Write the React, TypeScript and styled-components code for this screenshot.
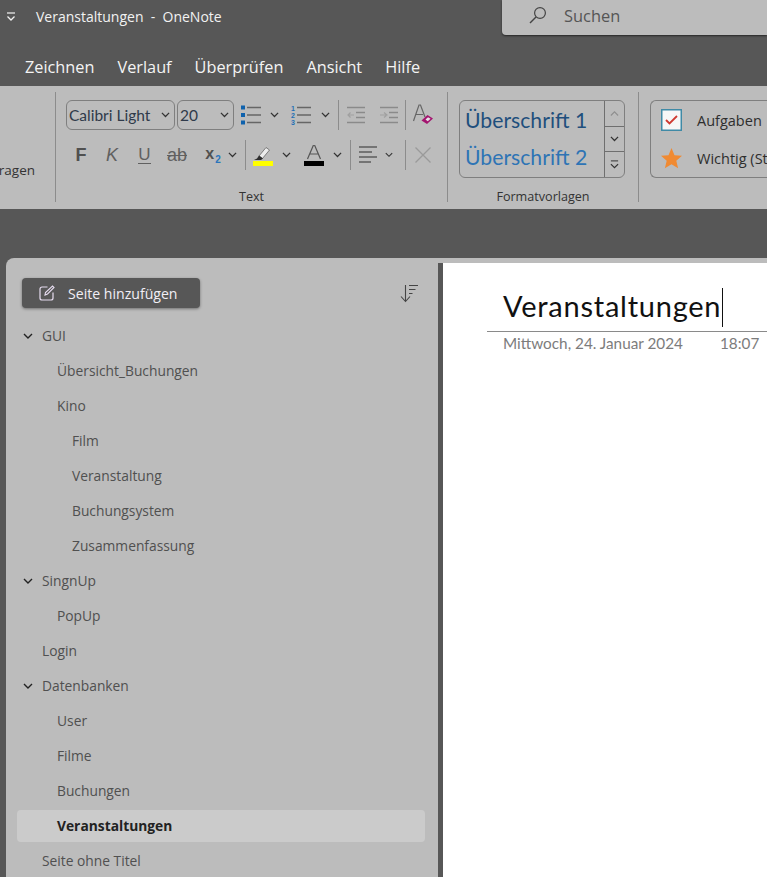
import styled, { createGlobalStyle } from "styled-components";

const UI_FONT = `"Open Sans", "Noto Sans", sans-serif`;
const DOC_FONT = `Lato, "Liberation Sans", sans-serif`;

const GlobalStyle = createGlobalStyle`
  html, body {
    margin: 0;
    padding: 0;
    height: 100%;
    overflow: hidden;
    background: #575757;
  }
`;

const Window = styled.div`
  width: 767px;
  height: 877px;
  display: flex;
  flex-direction: column;
  overflow: hidden;
  background: #575757;
  font-family: ${UI_FONT};
`;

const TitleBar = styled.header`
  height: 36px;
  display: flex;
  align-items: flex-start;
  color: #f2f2f2;
`;

const QuickAccess = styled.div`
  width: 36px;
  height: 34px;
  padding-left: 6px;
  box-sizing: border-box;
  display: flex;
  align-items: center;
`;

const AppTitle = styled.div`
  flex: 1;
  height: 34px;
  line-height: 34px;
  font-size: 14px;
  white-space: pre;
`;

const SearchBox = styled.div`
  width: 265px;
  height: 35px;
  padding: 0 0 5px 27px;
  box-sizing: border-box;
  display: flex;
  align-items: center;
  gap: 17px;
  background: #bcbcbc;
  border-bottom-left-radius: 4px;
  box-shadow: 0 1px 2px rgba(0, 0, 0, 0.55);
  color: #555;
  font-size: 16.4px;
`;

const TabBar = styled.nav`
  height: 50px;
  padding: 12px 0 0 25px;
  box-sizing: border-box;
  display: flex;
  align-items: center;
  gap: 23px;
`;

const Tab = styled.span`
  color: #f4f4f4;
  font-size: 16.3px;
`;

const Ribbon = styled.section`
  height: 123px;
  padding-top: 6px;
  box-sizing: border-box;
  display: flex;
  background: #bcbcbc;
`;

const Group = styled.div<{ $width: number }>`
  width: ${(p) => p.$width}px;
  height: 110px;
  flex: none;
  box-sizing: border-box;
  border-right: 1px solid #8c8c8c;
  display: flex;
  flex-direction: column;
  &:last-child {
    border-right: none;
  }
`;

const GroupBody = styled.div<{ $pad?: number }>`
  height: 98px;
  flex: none;
  padding: 8px 0 0 ${(p) => p.$pad ?? 0}px;
  box-sizing: border-box;
  display: flex;
`;

const GroupLabel = styled.div`
  height: 14px;
  flex: none;
  line-height: 14px;
  text-align: center;
  font-size: 12.6px;
  color: #333;
`;

const ClippedBody = styled.div`
  height: 96px;
  padding: 69px 20px 0 0;
  box-sizing: border-box;
  display: flex;
  justify-content: flex-end;
  font-size: 13.5px;
  color: #333;
`;

const ToolRows = styled.div`
  display: flex;
  flex-direction: column;
  gap: 10px;
`;

const ToolRow = styled.div`
  height: 30px;
  display: flex;
  align-items: center;
`;

const FontSelect = styled.div<{ $width: number }>`
  width: ${(p) => p.$width}px;
  height: 30px;
  margin-right: 2px;
  padding: 0 4px 0 2px;
  box-sizing: border-box;
  display: flex;
  align-items: center;
  justify-content: space-between;
  border: 1px solid #7f7f7f;
  border-radius: 6px;
  font-family: ${DOC_FONT};
  font-size: 15.5px;
  color: #2f3a4a;
`;

const Cell = styled.div<{ $width: number; $left?: number }>`
  width: ${(p) => p.$width}px;
  height: 30px;
  margin-left: ${(p) => p.$left ?? 0}px;
  flex: none;
  display: flex;
  align-items: center;
  justify-content: center;
  font-family: ${UI_FONT};
`;

const Divider = styled.div<{ $left?: number }>`
  width: 1px;
  height: 30px;
  margin-left: ${(p) => p.$left ?? 0}px;
  flex: none;
  background: #8c8c8c;
`;

const BoldGlyph = styled.span`
  font-weight: 700;
  font-size: 18px;
  font-family: "Liberation Sans", sans-serif;
  color: #505050;
`;

const ItalicGlyph = styled.span`
  font-style: italic;
  font-size: 18px;
  font-family: "Liberation Sans", sans-serif;
  color: #606060;
`;

const UnderGlyph = styled.span`
  font-size: 17px;
  font-family: "Liberation Sans", sans-serif;
  color: #606060;
  border-bottom: 1.5px solid #606060;
  line-height: 17px;
`;

const StrikeGlyph = styled.span`
  font-size: 18px;
  font-family: "Liberation Sans", sans-serif;
  color: #606060;
  text-decoration: line-through;
`;

const SubGlyph = styled.span`
  font-weight: 700;
  font-size: 16px;
  font-family: "Liberation Sans", sans-serif;
  color: #505050;
  sub {
    font-size: 10px;
    font-weight: 700;
    color: #2a75bb;
    margin-left: 1px;
  }
`;

const StyleGallery = styled.div`
  width: 166px;
  height: 78px;
  margin-left: 11px;
  box-sizing: border-box;
  display: flex;
  border: 1px solid #7f7f7f;
  border-radius: 6px;
  overflow: hidden;
`;

const StyleList = styled.div`
  flex: 1;
  padding: 0 0 2px 5px;
  display: flex;
  flex-direction: column;
  justify-content: space-around;
  font-family: ${DOC_FONT};
  font-size: 21.2px;
  line-height: 36px;
`;

const StyleName = styled.div<{ $color: string }>`
  color: ${(p) => p.$color};
  white-space: nowrap;
`;

const Scroller = styled.div`
  width: 19px;
  flex: none;
  display: flex;
  flex-direction: column;
  border-left: 1px solid #6f6f6f;
`;

const ScrollCell = styled.div<{ $active?: boolean }>`
  flex: 1;
  display: flex;
  align-items: center;
  justify-content: center;
  & + & {
    border-top: 1px solid ${(p) => (p.$active ? "#6f6f6f" : "#8c8c8c")};
  }
`;

const TagBox = styled.div`
  width: 140px;
  height: 78px;
  margin-left: 11px;
  padding-left: 10px;
  box-sizing: border-box;
  flex: none;
  display: flex;
  flex-direction: column;
  justify-content: space-around;
  border: 1px solid #7f7f7f;
  border-right: none;
  border-radius: 6px 0 0 6px;
`;

const TagRow = styled.div`
  display: flex;
  align-items: center;
  gap: 15px;
  font-size: 14.5px;
  color: #2e2e2e;
  white-space: nowrap;
`;

const Workspace = styled.main`
  flex: 1;
  min-height: 0;
  margin-top: 49px;
  padding-left: 6px;
  display: flex;
`;

const Sidebar = styled.aside`
  width: 432px;
  flex: none;
  padding: 20px 13px 0 11px;
  box-sizing: border-box;
  background: #bcbcbc;
  border-top-left-radius: 8px;
`;

const SidebarTop = styled.div`
  height: 30px;
  margin-bottom: 12px;
  padding: 0 7px 0 5px;
  display: flex;
  align-items: center;
  justify-content: space-between;
`;

const AddPage = styled.button`
  width: 178px;
  height: 30px;
  padding: 0 0 0 17px;
  display: flex;
  align-items: center;
  gap: 13px;
  border: none;
  border-radius: 4px;
  background: #575757;
  box-shadow: 0 1px 3px rgba(0, 0, 0, 0.4);
  color: #f1eef5;
  font-family: ${UI_FONT};
  font-size: 14.1px;
`;

const PageList = styled.ul`
  margin: 0;
  padding: 0;
  list-style: none;
  display: flex;
  flex-direction: column;
  gap: 3px;
`;

const PageRow = styled.li<{ $level: number; $selected?: boolean }>`
  position: relative;
  height: 32px;
  padding: 0 0 2px ${(p) => 25 + p.$level * 15}px;
  box-sizing: border-box;
  display: flex;
  align-items: center;
  border-radius: 4px;
  background: ${(p) => (p.$selected ? "#cbcbcb" : "transparent")};
  color: ${(p) => (p.$selected ? "#222" : "#505050")};
  font-size: 13.8px;
  font-weight: ${(p) => (p.$selected ? 700 : 400)};
`;

const Caret = styled.span`
  position: absolute;
  left: 6px;
  top: 13px;
  display: flex;
`;

const PageArea = styled.div`
  flex: 1;
  padding-top: 5px;
  display: flex;
  background: #bcbcbc;
`;

const Canvas = styled.article`
  flex: 1;
  padding-top: 25px;
  background: #fff;
  border-left: 5px solid #575757;
  overflow: hidden;
`;

const TitleLine = styled.div`
  height: 43px;
  margin-left: 44px;
  padding-left: 16px;
  display: flex;
  align-items: flex-start;
  border-bottom: 1px solid #8a8a8a;
`;

const PageTitle = styled.h1`
  margin: 0;
  font-family: ${DOC_FONT};
  font-size: 29px;
  font-weight: 400;
  letter-spacing: 0.75px;
  line-height: 36px;
  color: #111;
  white-space: nowrap;
`;

const TextCursor = styled.span`
  width: 1px;
  height: 39px;
  margin-left: 1px;
  flex: none;
  background: #111;
`;

const Stamp = styled.div`
  margin: 1px 0 0 60px;
  display: flex;
  gap: 37px;
  font-family: ${DOC_FONT};
  font-size: 15.3px;
  line-height: 20px;
  color: #7c7c7c;
  white-space: nowrap;
`;

const Chevron = ({ color = "#333", size = 9 }: { color?: string; size?: number }) => (
  <svg width={size} height={size * 0.6} viewBox="0 0 10 6" fill="none">
    <path d="M1 1l4 4 4-4" stroke={color} strokeWidth="1.4" />
  </svg>
);

const LinesIcon = ({ x = 0, width = 14, color = "#666" }: { x?: number; width?: number; color?: string }) => (
  <g stroke={color} strokeWidth="1.3">
    <path d={`M${x} 2.5h${width}M${x} 10h${width}M${x} 17.5h${width}`} />
  </g>
);

const BulletsIcon = () => (
  <svg width="20" height="20" viewBox="0 0 20 20">
    <rect x="0" y="0.5" width="4" height="4" fill="#0f62ad" />
    <rect x="0" y="8" width="4" height="4" fill="#0f62ad" />
    <rect x="0" y="15.5" width="4" height="4" fill="#0f62ad" />
    <LinesIcon x={6} />
  </svg>
);

const NumberingIcon = () => (
  <svg width="20" height="20" viewBox="0 0 20 20">
    <g fill="#1f6fb5" fontSize="7" fontWeight="700" fontFamily="Liberation Sans">
      <text x="0" y="6">1</text>
      <text x="0" y="13">2</text>
      <text x="0" y="20">3</text>
    </g>
    <LinesIcon x={6} />
  </svg>
);

const IndentIcon = ({ flip }: { flip?: boolean }) => (
  <svg width="18" height="18" viewBox="0 0 18 18" fill="none">
    <path d="M0 1.5h18M9 6.5h9M9 11.5h9M0 16.5h18" stroke="#8a8a8a" strokeWidth="1.3" />
    <path
      d={flip ? "M0 9h6M4 6.5L7 9l-3 2.5" : "M7 9H1M3.5 6.5L1 9l2.5 2.5"}
      stroke="#a0a0a0"
      strokeWidth="1.2"
    />
  </svg>
);

const ClearFormatIcon = () => (
  <svg width="21" height="22" viewBox="0 0 21 22" fill="none">
    <path d="M0.5 17L6 1h1.5L12 13M3 10.5h7" stroke="#666" strokeWidth="1.2" />
    <path d="M8.5 16.5l6-5.5 5.5 3.5-6 5.5z" fill="#a3146f" />
    <path d="M12.5 15.5l2.5-2.3 2.6 1.6-2.8 2.5z" fill="#e8e0e6" />
  </svg>
);

const HighlightIcon = () => (
  <svg width="20" height="21" viewBox="0 0 20 21">
    <path d="M6 11L13 2.5l3.5 2.5-7 8.5z" fill="#ececec" stroke="#666" strokeWidth="0.8" />
    <path d="M1 15l3-1.5 2-3 4 3-2 1.5z" fill="#2e2e2e" />
    <rect x="0" y="16" width="20" height="5" fill="#ffff00" />
  </svg>
);

const FontColorIcon = () => (
  <svg width="20" height="21" viewBox="0 0 20 21" fill="none">
    <path d="M3.5 14L9.5 0h1l6 14M6 9h8" stroke="#555" strokeWidth="1.2" />
    <rect x="0" y="16" width="20" height="5" fill="#000" />
  </svg>
);

const AlignIcon = () => (
  <svg width="18" height="18" viewBox="0 0 18 18" fill="none">
    <path d="M0 1h18M0 6h13M0 11h18M0 16h12" stroke="#5c5c5c" strokeWidth="1.4" />
  </svg>
);

const CloseIcon = () => (
  <svg width="16" height="16" viewBox="0 0 16 16" fill="none">
    <path d="M0.5 0.5l15 15M15.5 0.5l-15 15" stroke="#9a9a9a" strokeWidth="1.3" />
  </svg>
);

const SearchIcon = () => (
  <svg width="18" height="18" viewBox="0 0 18 18" fill="none">
    <circle cx="11" cy="7" r="5.4" stroke="#444" strokeWidth="1.2" />
    <path d="M7 11l-6 6" stroke="#444" strokeWidth="1.4" />
  </svg>
);

const QuickMenuIcon = () => (
  <svg width="10" height="10" viewBox="0 0 10 10" fill="none">
    <path d="M1 1h8" stroke="#f2f2f2" strokeWidth="1.2" />
    <path d="M1.5 4.5L5 8l3.5-3.5" stroke="#f2f2f2" strokeWidth="1.3" />
  </svg>
);

const CheckboxIcon = () => (
  <svg width="21" height="22" viewBox="0 0 21 22">
    <rect x="0.75" y="0.75" width="19.5" height="20.5" fill="#f7f7f7" stroke="#3f8aa6" strokeWidth="1.5" />
    <path d="M5 11l3.5 3.5L16 7" fill="none" stroke="#cf3a32" strokeWidth="1.8" />
  </svg>
);

const StarIcon = () => (
  <svg width="21" height="21" viewBox="0 0 21 21">
    <path d="M10.5 0l3 7.2 7.5.6-5.7 4.9 1.8 7.6-6.6-4.1-6.6 4.1 1.8-7.6L0 7.8l7.5-.6z" fill="#f08a32" />
  </svg>
);

const AddPageIcon = () => (
  <svg width="16" height="16" viewBox="0 0 16 16" fill="none">
    <path d="M8.5 2H3a2 2 0 0 0-2 2v9a2 2 0 0 0 2 2h9a2 2 0 0 0 2-2V7.5" stroke="#e6dcf0" strokeWidth="1.2" />
    <path d="M6 10l.5-2.5L13.5 1 15 2.5 8.5 9z" stroke="#e6dcf0" strokeWidth="1.1" />
  </svg>
);

const SortIcon = () => (
  <svg width="18" height="19" viewBox="0 0 18 19" fill="none">
    <path d="M5.5 1v16M1 12.5L5.5 17.5 10 12.5" stroke="#444" strokeWidth="1.1" />
    <path d="M9 1.5h9M9 5.5h6.5M9 9.5h3.5" stroke="#444" strokeWidth="1.1" />
  </svg>
);

const UpArrow = () => (
  <svg width="9" height="5.4" viewBox="0 0 10 6" fill="none">
    <path d="M1 5l4-4 4 4" stroke="#8f8f8f" strokeWidth="1.3" />
  </svg>
);

const MoreArrow = () => (
  <svg width="9" height="9" viewBox="0 0 10 10" fill="none">
    <path d="M1 1h8" stroke="#333" strokeWidth="1.1" />
    <path d="M1 4.5l4 4 4-4" stroke="#333" strokeWidth="1.3" />
  </svg>
);

type PageEntry = { name: string; level: number; expandable?: boolean; selected?: boolean };

const pages: PageEntry[] = [
  { name: "GUI", level: 0, expandable: true },
  { name: "Übersicht_Buchungen", level: 1 },
  { name: "Kino", level: 1 },
  { name: "Film", level: 2 },
  { name: "Veranstaltung", level: 2 },
  { name: "Buchungsystem", level: 2 },
  { name: "Zusammenfassung", level: 2 },
  { name: "SingnUp", level: 0, expandable: true },
  { name: "PopUp", level: 1 },
  { name: "Login", level: 0 },
  { name: "Datenbanken", level: 0, expandable: true },
  { name: "User", level: 1 },
  { name: "Filme", level: 1 },
  { name: "Buchungen", level: 1 },
  { name: "Veranstaltungen", level: 1, selected: true },
  { name: "Seite ohne Titel", level: 0 },
];

const tabs = ["Zeichnen", "Verlauf", "Überprüfen", "Ansicht", "Hilfe"];

export default function App() {
  return (
    <>
      <GlobalStyle />
      <Window>
        <TitleBar>
          <QuickAccess>
            <QuickMenuIcon />
          </QuickAccess>
          <AppTitle>{"Veranstaltungen  -  OneNote"}</AppTitle>
          <SearchBox>
            <SearchIcon />
            Suchen
          </SearchBox>
        </TitleBar>
        <TabBar>
          {tabs.map((tab) => (
            <Tab key={tab}>{tab}</Tab>
          ))}
        </TabBar>
        <Ribbon>
          <Group $width={56}>
            <ClippedBody>ragen</ClippedBody>
          </Group>
          <Group $width={392}>
            <GroupBody $pad={10}>
              <ToolRows>
                <ToolRow>
                  <FontSelect $width={109}>
                    Calibri Light
                    <Chevron />
                  </FontSelect>
                  <FontSelect $width={57}>
                    20
                    <Chevron />
                  </FontSelect>
                  <Cell $width={30}><BulletsIcon /></Cell>
                  <Cell $width={16}><Chevron /></Cell>
                  <Cell $width={38}><NumberingIcon /></Cell>
                  <Cell $width={10}><Chevron /></Cell>
                  <Divider $left={8} />
                  <Cell $width={34}><IndentIcon /></Cell>
                  <Cell $width={32}><IndentIcon flip /></Cell>
                  <Divider />
                  <Cell $width={34}><ClearFormatIcon /></Cell>
                </ToolRow>
                <ToolRow>
                  <Cell $width={30}><BoldGlyph>F</BoldGlyph></Cell>
                  <Cell $width={32}><ItalicGlyph>K</ItalicGlyph></Cell>
                  <Cell $width={33}><UnderGlyph>U</UnderGlyph></Cell>
                  <Cell $width={32}><StrikeGlyph>ab</StrikeGlyph></Cell>
                  <Cell $width={26} $left={7}><SubGlyph>x<sub>2</sub></SubGlyph></Cell>
                  <Cell $width={12}><Chevron /></Cell>
                  <Divider $left={7} />
                  <Cell $width={34}><HighlightIcon /></Cell>
                  <Cell $width={12}><Chevron /></Cell>
                  <Cell $width={36} $left={4}><FontColorIcon /></Cell>
                  <Cell $width={10}><Chevron /></Cell>
                  <Divider $left={8} />
                  <Cell $width={34}><AlignIcon /></Cell>
                  <Cell $width={8}><Chevron /></Cell>
                  <Divider $left={12} />
                  <Cell $width={34}><CloseIcon /></Cell>
                </ToolRow>
              </ToolRows>
            </GroupBody>
            <GroupLabel>Text</GroupLabel>
          </Group>
          <Group $width={191}>
            <GroupBody>
              <StyleGallery>
                <StyleList>
                  <StyleName $color="#1f4f7d">Überschrift 1</StyleName>
                  <StyleName $color="#2e74b5">Überschrift 2</StyleName>
                </StyleList>
                <Scroller>
                  <ScrollCell><UpArrow /></ScrollCell>
                  <ScrollCell $active><Chevron /></ScrollCell>
                  <ScrollCell $active><MoreArrow /></ScrollCell>
                </Scroller>
              </StyleGallery>
            </GroupBody>
            <GroupLabel>Formatvorlagen</GroupLabel>
          </Group>
          <Group $width={128}>
            <GroupBody>
              <TagBox>
                <TagRow>
                  <CheckboxIcon />
                  Aufgaben
                </TagRow>
                <TagRow>
                  <StarIcon />
                  Wichtig (St
                </TagRow>
              </TagBox>
            </GroupBody>
          </Group>
        </Ribbon>
        <Workspace>
          <Sidebar>
            <SidebarTop>
              <AddPage>
                <AddPageIcon />
                Seite hinzufügen
              </AddPage>
              <SortIcon />
            </SidebarTop>
            <PageList>
              {pages.map((page) => (
                <PageRow key={page.name} $level={page.level} $selected={page.selected}>
                  {page.expandable && (
                    <Caret>
                      <Chevron size={10} color="#222" />
                    </Caret>
                  )}
                  {page.name}
                </PageRow>
              ))}
            </PageList>
          </Sidebar>
          <PageArea>
            <Canvas>
              <TitleLine>
                <PageTitle>Veranstaltungen</PageTitle>
                <TextCursor />
              </TitleLine>
              <Stamp>
                <span>Mittwoch, 24. Januar 2024</span>
                <span>18:07</span>
              </Stamp>
            </Canvas>
          </PageArea>
        </Workspace>
      </Window>
    </>
  );
}
